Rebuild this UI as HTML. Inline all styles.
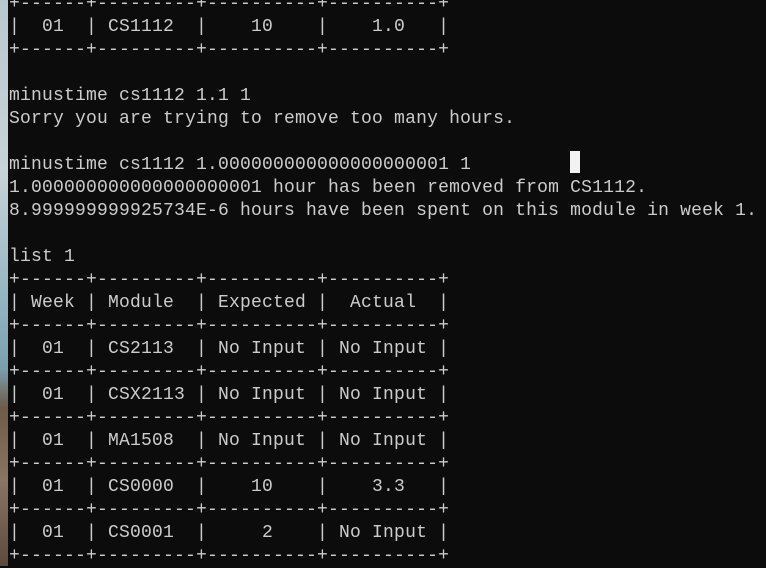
<!DOCTYPE html>
<html><head><meta charset="utf-8"><style>
html,body{margin:0;padding:0;width:766px;height:566px;overflow:hidden;background:#0c0c0c}
#strip{position:absolute;left:0;top:0;width:8px;height:566px;background:linear-gradient(#b9c7cf 0%,#c8d3d8 30%,#8fb1c0 55%,#7aa0b0 65%,#6f5a4a 72%,#8a7464 85%,#5d4a3e 100%)}
pre{position:absolute;left:9px;top:-7px;margin:0;font-family:"Liberation Mono",monospace;font-size:18px;letter-spacing:0.2px;line-height:23px;color:#cccccc}
.c{display:inline-block;width:10px;height:22px;background:#f2f2f2;vertical-align:top;margin-top:-3px}
</style></head><body>
<div id="strip"></div>
<pre>+------+---------+----------+----------+
|  01  | CS1112  |    10    |    1.0   |
+------+---------+----------+----------+

minustime cs1112 1.1 1
Sorry you are trying to remove too many hours.

minustime cs1112 1.000000000000000000001 1         <span class="c"></span>
1.000000000000000000001 hour has been removed from CS1112.
8.999999999925734E-6 hours have been spent on this module in week 1.

list 1
+------+---------+----------+----------+
| Week | Module  | Expected |  Actual  |
+------+---------+----------+----------+
|  01  | CS2113  | No Input | No Input |
+------+---------+----------+----------+
|  01  | CSX2113 | No Input | No Input |
+------+---------+----------+----------+
|  01  | MA1508  | No Input | No Input |
+------+---------+----------+----------+
|  01  | CS0000  |    10    |    3.3   |
+------+---------+----------+----------+
|  01  | CS0001  |     2    | No Input |
+------+---------+----------+----------+</pre>
</body></html>
